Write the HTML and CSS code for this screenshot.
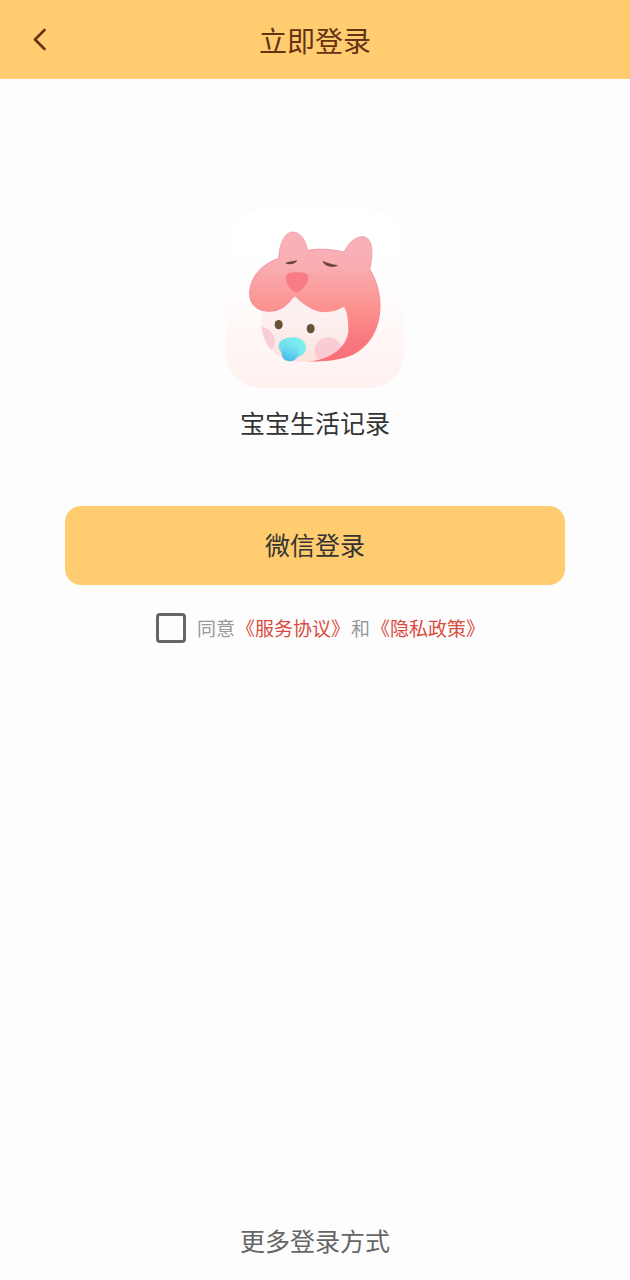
FILE: index.html
```html
<!DOCTYPE html>
<html lang="zh-CN">
<head>
<meta charset="utf-8">
<meta name="viewport" content="width=device-width, initial-scale=1">
<title>立即登录</title>
<link rel="stylesheet" href="styles.css">
</head>
<body>
<header class="topbar">
  <button class="back" type="button" aria-label="返回">
    <svg width="16" height="24" viewBox="0 0 16 24" fill="none" stroke="#653212" stroke-width="2.600" stroke-linecap="round" stroke-linejoin="round"><path d="M12.500 2L3 11.500L12.500 21"/></svg>
  </button>
  <h1 class="title">立即登录</h1>
</header>
<main class="content">
  <svg class="logo" viewBox="33 30 534 534" aria-hidden="true">
    <defs>
      <linearGradient id="tile" x1="0" y1="0" x2="0" y2="1"><stop offset="0" stop-color="#ffffff"/><stop offset=".42" stop-color="#fffefe"/><stop offset=".75" stop-color="#fff6f5"/><stop offset="1" stop-color="#fff1f0"/></linearGradient>
      <linearGradient id="hood" gradientUnits="userSpaceOnUse" x1="0" y1="95" x2="0" y2="484"><stop offset="0" stop-color="#f9b2ba"/><stop offset=".27" stop-color="#f9adb2"/><stop offset=".6" stop-color="#fc918d"/><stop offset=".8" stop-color="#f97b80"/><stop offset="1" stop-color="#f96d79"/></linearGradient>
      <linearGradient id="rim" gradientUnits="userSpaceOnUse" x1="0" y1="95" x2="0" y2="484"><stop offset="0" stop-color="#f1a5af"/><stop offset="1" stop-color="#f6717a"/></linearGradient>
      <linearGradient id="face" gradientUnits="userSpaceOnUse" x1="0" y1="290" x2="0" y2="486"><stop offset="0" stop-color="#fbf1f3"/><stop offset=".5" stop-color="#fceeed"/><stop offset="1" stop-color="#fde1d8"/></linearGradient>
      <linearGradient id="teat" x1="0" y1=".7" x2="1" y2=".2"><stop offset="0" stop-color="#72d8ec"/><stop offset="1" stop-color="#7cf5ee"/></linearGradient>
      <linearGradient id="knob" x1=".7" y1="0" x2=".3" y2="1"><stop offset="0" stop-color="#7de7f3"/><stop offset="1" stop-color="#45b9e7"/></linearGradient>
      <clipPath id="faceClip"><path d="M141 325C134 370 140 420 170 450C205 486 255 487 290 484C355 474 404 434 400 382C399 350 394 328 386 321L240 289Z"/></clipPath>
    </defs>
    <rect x="33" y="30" width="534" height="534" rx="105" fill="url(#tile)"/>
    <path d="M191 175C194 133 207 97 234 96C258 97 275 127 277 151C311 145 349 147 387 156C400 130 420 109 445 110C475 115 475 163 464 207C484 240 496 280 495 325C491 403 450 453 395 470C365 479 328 484 280 483L240 289C221 307 207 336 163 335C123 334 101 309 104 274C109 224 145 191 191 175Z" fill="url(#hood)" stroke="url(#rim)" stroke-width="3"/>
    <path d="M141 332C134 372 140 420 170 450C205 486 255 487 290 484C355 474 404 434 400 382C399 350 394 328 386 321C363 334 328 343 299 331C273 320 255 305 240 289C221 307 207 336 163 335C155 335 148 334 141 332Z" fill="url(#face)"/>
    <g clip-path="url(#faceClip)">
      <circle cx="136" cy="424" r="43" fill="#f9c7d2" fill-opacity=".88"/>
      <circle cx="340" cy="453" r="41" fill="#f9c7d2" fill-opacity=".88"/>
    </g>
    <path d="M212 235C213 220 226 216 247 217C266 217 281 219 280 233C280 249 261 272 247 279C230 276 212 252 212 235Z" fill="#f87c86"/>
    <path d="M211 190C220 184 232 185 247 181C242 192 223 196 211 190Z" fill="#694637"/>
    <path d="M322 183C337 188 352 193 369 196C357 205 331 202 322 183Z" fill="#694637"/>
    <ellipse cx="191" cy="374" rx="12" ry="14" fill="#655334"/>
    <ellipse cx="287" cy="386" rx="12" ry="14" fill="#655334"/>
    <path d="M191 439C190 421 211 412 235 412C259 413 274 427 273 444C272 465 250 474 234 471C211 472 192 458 191 439Z" fill="url(#teat)"/>
    <path d="M202 447C210 435 225 433 234 439C245 443 252 452 251 461C248 475 237 484 224 484C208 483 199 472 200 459Z" fill="url(#knob)"/>
  </svg>
  <p class="app-name">宝宝生活记录</p>
  <button class="login" type="button">微信登录</button>
  <div class="agreement">
    <input class="check" id="agree" type="checkbox">
    <label class="terms" for="agree">同意<a href="#terms">《服务协议》</a>和<a href="#privacy">《隐私政策》</a></label>
  </div>
</main>
<footer class="footer"><button class="more" type="button">更多登录方式</button></footer>
</body>
</html>
```
FILE: styles.css
```css
* {
  box-sizing: border-box;
}

body {
  margin: 0;
  min-height: 100vh;
  display: flex;
  flex-direction: column;
  background: #fdfdfd;
  color: #333;
  font-family: "Noto Sans CJK SC", sans-serif;
}

button {
  border: 0;
  padding: 0;
  background: none;
  font-family: inherit;
  cursor: pointer;
}

.topbar {
  display: grid;
  grid-template-columns: 80px 1fr 80px;
  align-items: center;
  min-height: 79px;
  background: #ffcc70;
  color: #653212;
}

.back {
  display: flex;
  align-items: center;
  justify-content: center;
  height: 64px;
}

.title {
  margin: 0;
  font-size: 28px;
  font-weight: 400;
  line-height: 40px;
  text-align: center;
}

.content {
  flex: 1;
  display: flex;
  flex-direction: column;
  align-items: center;
  padding: 131px 65px 40px;
}

.logo {
  width: 178px;
  height: 178px;
}

.app-name {
  margin: 14px 0 64px;
  font-size: 25px;
  line-height: 40px;
}

.login {
  width: 100%;
  min-height: 79px;
  padding-bottom: 3px;
  border-radius: 16px;
  background: #ffcc70;
  color: #333;
  font-size: 25px;
  line-height: 40px;
}

.agreement {
  display: flex;
  align-items: center;
  gap: 11px;
  margin-top: 28px;
  padding-left: 12px;
}

.check {
  appearance: none;
  width: 30px;
  height: 30px;
  margin: 0;
  border: 3px solid #666;
  border-radius: 4px;
}

.check:checked {
  background: #ffcc70;
}

.terms {
  color: #999;
  font-size: 19px;
  line-height: 28px;
}

.terms a {
  margin: 0 1px;
  color: #d94b3d;
  text-decoration: none;
}

.footer {
  display: flex;
  justify-content: center;
  padding-bottom: 20px;
}

.more {
  color: #666;
  font-size: 25px;
  line-height: 40px;
}
```
